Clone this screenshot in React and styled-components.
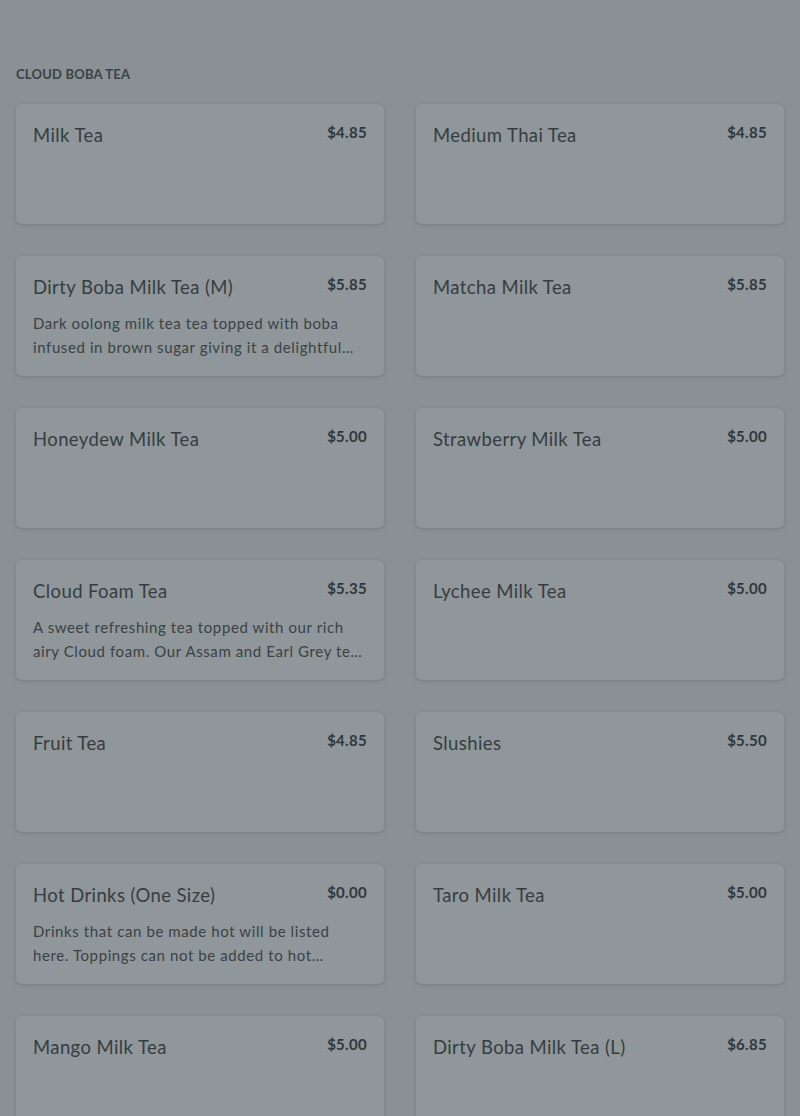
import React from 'react'
import styled, { createGlobalStyle } from 'styled-components'

const items = [
  { name: 'Milk Tea', price: '$4.85' },
  { name: 'Medium Thai Tea', price: '$4.85' },
  {
    name: 'Dirty Boba Milk Tea (M)',
    price: '$5.85',
    desc: 'Dark oolong milk tea tea topped with boba infused in brown sugar giving it a delightful caramel flavor.',
  },
  { name: 'Matcha Milk Tea', price: '$5.85' },
  { name: 'Honeydew Milk Tea', price: '$5.00' },
  { name: 'Strawberry Milk Tea', price: '$5.00' },
  {
    name: 'Cloud Foam Tea',
    price: '$5.35',
    desc: 'A sweet refreshing tea topped with our rich airy Cloud foam. Our Assam and Earl Grey teas pair perfectly.',
  },
  { name: 'Lychee Milk Tea', price: '$5.00' },
  { name: 'Fruit Tea', price: '$4.85' },
  { name: 'Slushies', price: '$5.50' },
  {
    name: 'Hot Drinks (One Size)',
    price: '$0.00',
    desc: 'Drinks that can be made hot will be listed here. Toppings can not be added to hot beverages.',
  },
  { name: 'Taro Milk Tea', price: '$5.00' },
  { name: 'Mango Milk Tea', price: '$5.00' },
  { name: 'Dirty Boba Milk Tea (L)', price: '$6.85' },
]

const GlobalStyle = createGlobalStyle`
  html, body {
    margin: 0;
    padding: 0;
    background: #899194;
    font-family: Lato, "Noto Sans", sans-serif;
  }
  * { box-sizing: border-box; }
`

const Page = styled.main`
  height: 1116px;
  overflow: hidden;
  padding: 66px 16px 0;
`

const SectionTitle = styled.h2`
  margin: 0 0 22px;
  font-size: 13px;
  line-height: 16px;
  font-weight: 700;
  letter-spacing: 0.2px;
  text-transform: uppercase;
  color: #3b4245;
`

const Grid = styled.div`
  display: grid;
  grid-template-columns: 1fr 1fr;
  gap: 32px;
`

const Card = styled.div`
  height: 120px;
  padding: 19px 17px;
  background: #8f979a;
  border-radius: 6px;
  box-shadow: 0 1px 4px rgba(40, 46, 49, 0.18);
`

const Head = styled.div`
  display: flex;
  justify-content: space-between;
  align-items: flex-start;
  gap: 12px;
`

const Name = styled.h3`
  margin: 0;
  font-size: 18.5px;
  line-height: 24px;
  font-weight: 400;
  letter-spacing: 0.4px;
  color: #363d40;
`

const Price = styled.span`
  font-size: 15px;
  line-height: 20px;
  font-weight: 700;
  letter-spacing: 0.3px;
  color: #30373a;
  margin-top: -1px;
`

const Desc = styled.p`
  margin: 12px 0 0;
  font-size: 15px;
  line-height: 24px;
  letter-spacing: 0.6px;
  color: #3b4245;
  display: -webkit-box;
  -webkit-line-clamp: 2;
  -webkit-box-orient: vertical;
  overflow: hidden;
`

export default function App() {
  return (
    <>
      <GlobalStyle />
      <Page>
        <SectionTitle>Cloud Boba Tea</SectionTitle>
        <Grid>
          {items.map((item) => (
            <Card key={item.name}>
              <Head>
                <Name>{item.name}</Name>
                <Price>{item.price}</Price>
              </Head>
              {item.desc && <Desc>{item.desc}</Desc>}
            </Card>
          ))}
        </Grid>
      </Page>
    </>
  )
}
